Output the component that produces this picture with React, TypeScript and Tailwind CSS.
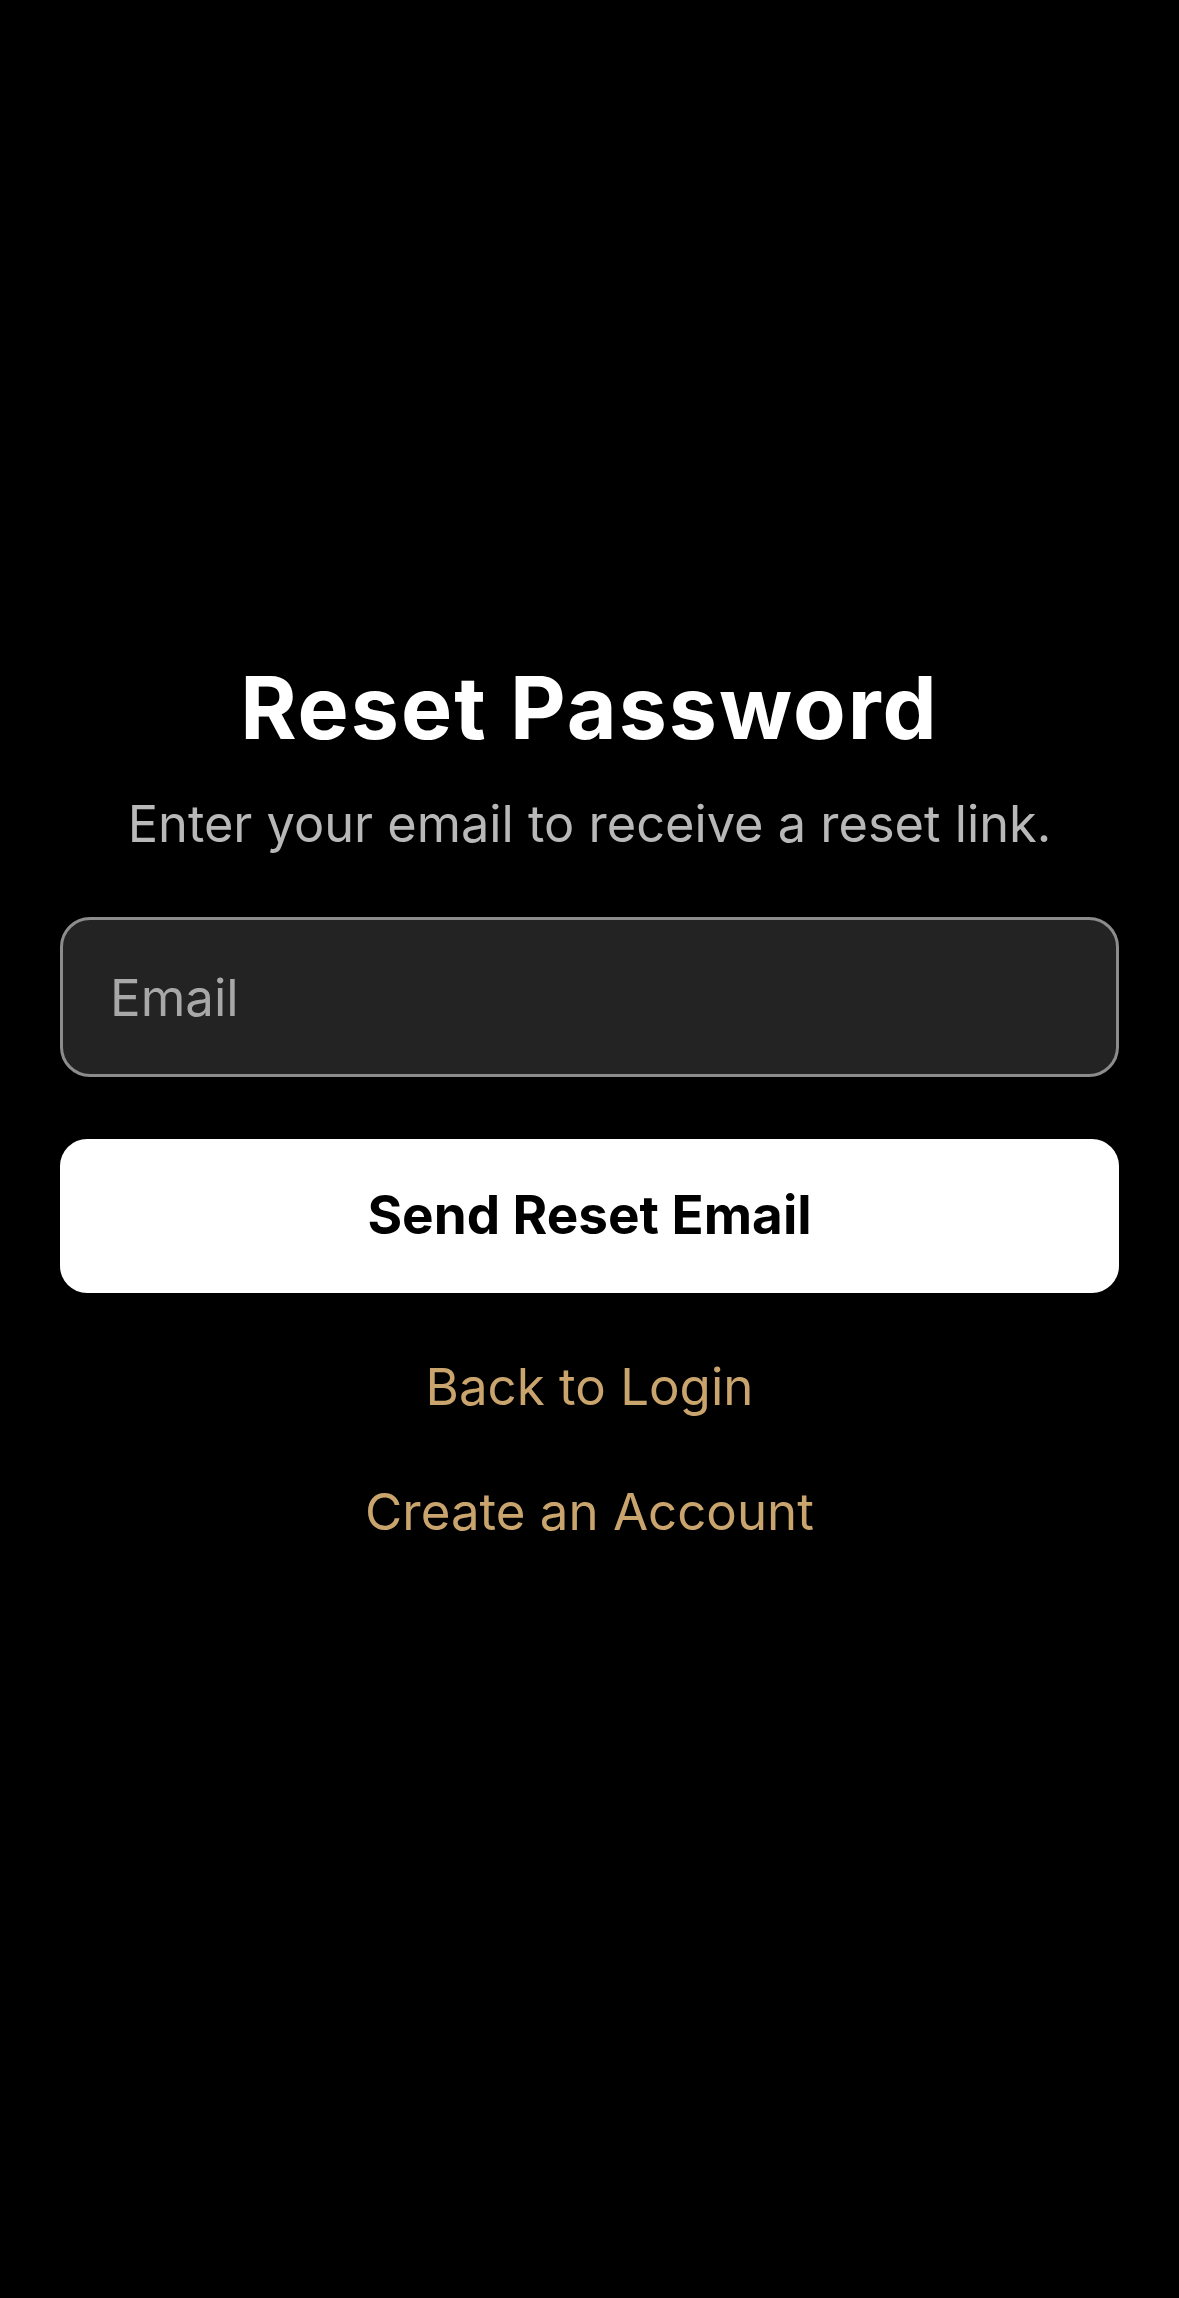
const font = { fontFamily: "Inter, 'Noto Sans', sans-serif" };

export default function App() {
  return (
    <main className="min-h-[2298px] w-full bg-black text-white" style={font}>
      <div className="flex flex-col items-center px-[60px] pt-[658px]">
        <h1 className="text-[86px] font-bold leading-[100px] tracking-[2px] text-white">
          Reset Password
        </h1>
        <p className="mt-[36px] text-[50.5px] leading-[60px] text-[#b8b8b8]">
          Enter your email to receive a reset link.
        </p>

        <form className="mt-[63px] flex w-full flex-col">
          <input
            type="email"
            placeholder="Email"
            className="h-[160px] w-full rounded-[30px] border-[3px] border-[#8c8c8c] bg-[#232323] px-[47px] text-[51px] text-white outline-none placeholder:text-[#a8a8a8]"
          />
          <button
            type="submit"
            className="mt-[62px] h-[154px] w-full rounded-[27px] bg-white text-[53px] font-bold text-black"
          >
            Send Reset Email
          </button>
        </form>

        <a href="#" className="mt-[62px] text-[51px] leading-[64px] text-[#c9a46d]">
          Back to Login
        </a>
        <a href="#" className="mt-[61px] text-[51px] leading-[64px] text-[#c9a46d]">
          Create an Account
        </a>
      </div>
    </main>
  );
}
